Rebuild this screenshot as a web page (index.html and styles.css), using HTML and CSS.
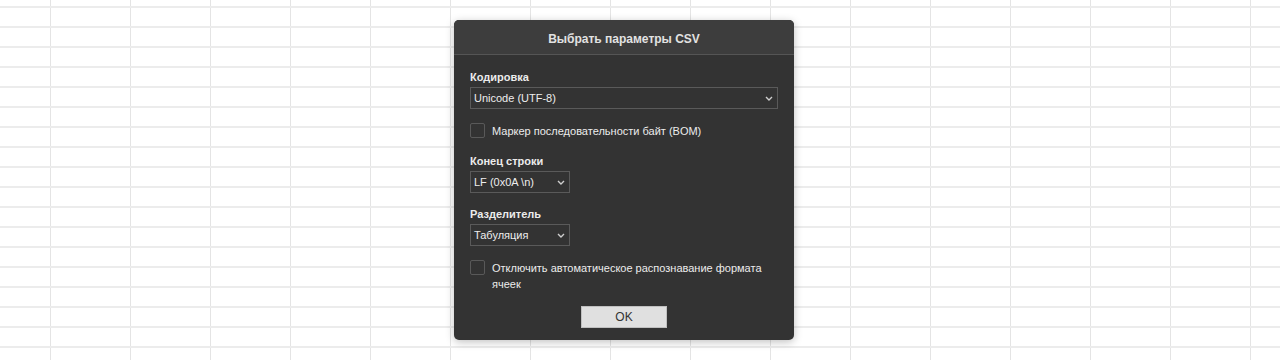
FILE: index.html
```html
<!DOCTYPE html>
<html>
<head>
<meta charset="utf-8">
<link rel="stylesheet" href="styles.css">
</head>
<body>
<div class="sheet">
  <div class="dialog">
    <div class="dlg-header">Выбрать параметры CSV</div>
    <div class="dlg-body">
      <div class="field">
        <div class="label">Кодировка</div>
        <div class="select wide"><span>Unicode (UTF-8)</span><svg class="chev" viewBox="0 0 8 5" width="8" height="5"><path d="M1 1 L4 4 L7 1" fill="none" stroke="#cfcfcf" stroke-width="1.4"/></svg></div>
      </div>
      <label class="check"><span class="box"></span><span class="ctext">Маркер последовательности байт (BOM)</span></label>
      <div class="field">
        <div class="label">Конец строки</div>
        <div class="select narrow"><span>LF (0x0A \n)</span><svg class="chev" viewBox="0 0 8 5" width="8" height="5"><path d="M1 1 L4 4 L7 1" fill="none" stroke="#cfcfcf" stroke-width="1.4"/></svg></div>
      </div>
      <div class="field">
        <div class="label">Разделитель</div>
        <div class="select narrow"><span>Табуляция</span><svg class="chev" viewBox="0 0 8 5" width="8" height="5"><path d="M1 1 L4 4 L7 1" fill="none" stroke="#cfcfcf" stroke-width="1.4"/></svg></div>
      </div>
      <label class="check"><span class="box"></span><span class="ctext">Отключить автоматическое распознавание формата ячеек</span></label>
      <div class="footer"><button class="ok">OK</button></div>
    </div>
  </div>
</div>
</body>
</html>
```
FILE: styles.css
```css
html, body {
  margin: 0;
  padding: 0;
}
body {
  width: 1280px;
  height: 360px;
  overflow: hidden;
  font-family: "Liberation Sans", Arial, sans-serif;
  background-color: #ffffff;
}
.sheet {
  width: 1280px;
  height: 360px;
  background-image:
    linear-gradient(to bottom, transparent 6px, #ececec 6px, #ececec 8px, transparent 8px),
    linear-gradient(to right, transparent 50px, #e4e4e4 50px, #e4e4e4 51px, transparent 51px);
  background-size: 100% 20px, 80px 100%;
  background-position: 0 0, 0 0;
  display: flex;
  justify-content: center;
  padding-top: 20px;
  box-sizing: border-box;
}
.dialog {
  width: 340px;
  height: 320px;
  margin-left: -32px;
  background: #333333;
  border-radius: 5px;
  box-shadow: 0 2px 8px rgba(0,0,0,0.25);
  color: #ececec;
  font-size: 11px;
  overflow: hidden;
  display: flex;
  flex-direction: column;
}
.dlg-header {
  height: 34px;
  line-height: 38px;
  text-align: center;
  font-weight: bold;
  font-size: 12px;
  color: #e2e2e2;
  background: #3d3d3d;
  border-bottom: 1px solid #555555;
}
.dlg-body {
  padding: 14px 16px 0 16px;
  display: flex;
  flex-direction: column;
}
.field {
  display: flex;
  flex-direction: column;
}
.label {
  font-weight: bold;
  height: 17px;
  line-height: 17px;
  margin-bottom: 1px;
}
.select {
  height: 20px;
  border: 1px solid #5a5a5a;
  box-sizing: content-box;
  display: flex;
  align-items: center;
  justify-content: space-between;
  padding: 0 4px 0 3px;
  color: #eeeeee;
}
.select span {
  line-height: 19px;
}
.wide { width: 299px; }
.narrow { width: 91px; }
.check {
  display: flex;
  align-items: flex-start;
  margin: 14px 0 14px 0;
}
.box {
  width: 13px;
  height: 13px;
  border: 1px solid #595959;
  border-radius: 2px;
  flex: none;
  margin-top: 0px;
}
.ctext {
  margin-left: 7px;
  line-height: 16px;
  width: 290px;
}
.field + .field {
  margin-top: 13px;
}
.footer {
  display: flex;
  justify-content: center;
  margin-top: 0px;
}
.ok {
  width: 86px;
  height: 22px;
  background: #e0e0e0;
  border: 1px solid #c0c0c0;
  border-radius: 0;
  font-family: "Liberation Sans", Arial, sans-serif;
  font-size: 12px;
  color: #333333;
  padding: 0;
}
```
